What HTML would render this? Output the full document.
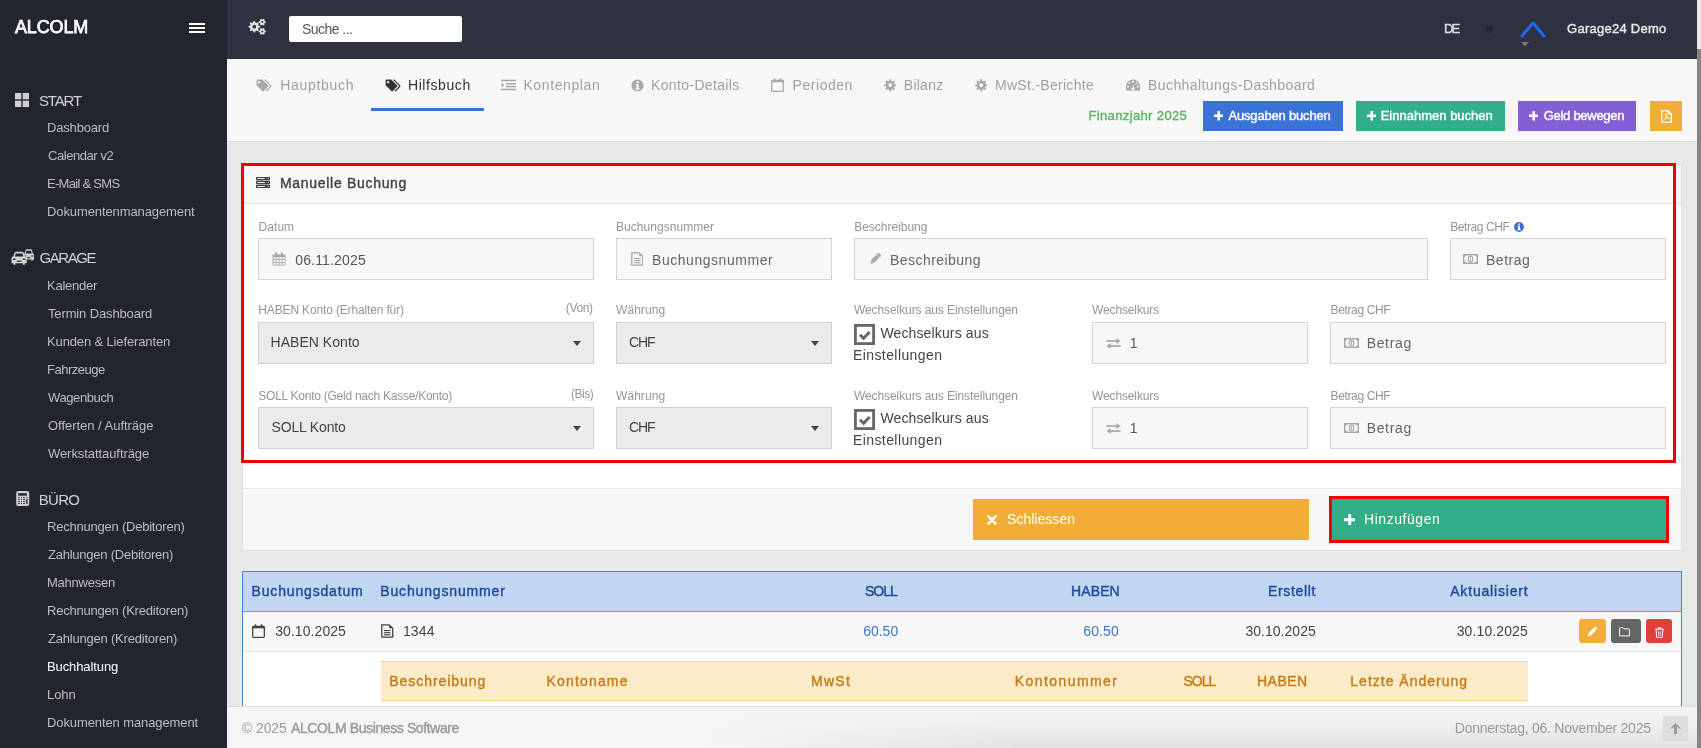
<!DOCTYPE html>
<html><head><meta charset="utf-8"><title>ALCOLM</title>
<style>
html,body{margin:0;padding:0;}
body{width:1701px;height:748px;overflow:hidden;position:relative;font-family:"Liberation Sans", sans-serif;background:#e8e8e8;}
svg{display:block}
</style></head><body>
<div style="position:absolute;left:0;top:0;width:1701px;height:748px;overflow:hidden;will-change:transform;background:#e8e8e8">
<div style="position:absolute;left:0px;top:0px;width:227px;height:748px;background:#22252e"></div>
<div style="position:absolute;left:227px;top:0px;width:1470px;height:59px;background:#2e3140"></div>
<div style="position:absolute;left:227px;top:59px;width:1470px;height:82px;background:#f7f7f7"></div>
<div style="position:absolute;left:227px;top:141px;width:1470px;height:1px;background:#dcdcdc"></div>
<div style="position:absolute;left:227px;top:142px;width:1470px;height:564px;background:#e8e8e8"></div>
<div style="position:absolute;left:1697px;top:0px;width:4px;height:748px;background:#ececec"></div>
<div style="position:absolute;left:1697px;top:49px;width:4px;height:699px;background:#858585"></div>
<span style="position:absolute;left:15.00px;top:18.26px;font-size:18px;line-height:18px;font-weight:400;color:#ffffff;white-space:nowrap;letter-spacing:-0.155px;-webkit-text-stroke:0.75px #ffffff;">ALCOLM</span>
<div style="position:absolute;left:189px;top:23px;width:16px;height:2px;background:#fff"></div>
<div style="position:absolute;left:189px;top:27px;width:16px;height:2px;background:#fff"></div>
<div style="position:absolute;left:189px;top:31px;width:16px;height:2px;background:#fff"></div>
<span style="position:absolute;left:39.00px;top:93.30px;font-size:15px;line-height:15px;font-weight:400;color:#d2d2d2;white-space:nowrap;letter-spacing:-1.155px;">START</span>
<svg style="position:absolute;left:15px;top:93px;" width="14" height="14" viewBox="0 0 14 14"><rect x="0" y="0" width="6.3" height="6.3" fill="#cfcfcf"/><rect x="7.7" y="0" width="6.3" height="6.3" fill="#cfcfcf"/><rect x="0" y="7.7" width="6.3" height="6.3" fill="#cfcfcf"/><rect x="7.7" y="7.7" width="6.3" height="6.3" fill="#cfcfcf"/></svg>
<span style="position:absolute;left:47.00px;top:121.00px;font-size:13px;line-height:13px;font-weight:400;color:#bdbdbd;white-space:nowrap;letter-spacing:-0.171px;">Dashboard</span>
<span style="position:absolute;left:48.00px;top:149.00px;font-size:13px;line-height:13px;font-weight:400;color:#bdbdbd;white-space:nowrap;letter-spacing:-0.437px;">Calendar v2</span>
<span style="position:absolute;left:47.00px;top:177.00px;font-size:13px;line-height:13px;font-weight:400;color:#bdbdbd;white-space:nowrap;letter-spacing:-0.712px;">E-Mail &amp; SMS</span>
<span style="position:absolute;left:47.00px;top:205.00px;font-size:13px;line-height:13px;font-weight:400;color:#bdbdbd;white-space:nowrap;letter-spacing:-0.104px;">Dokumentenmanagement</span>
<span style="position:absolute;left:39.50px;top:250.30px;font-size:15px;line-height:15px;font-weight:400;color:#d2d2d2;white-space:nowrap;letter-spacing:-1.435px;">GARAGE</span>
<span style="position:absolute;left:47.00px;top:279.00px;font-size:13px;line-height:13px;font-weight:400;color:#bdbdbd;white-space:nowrap;letter-spacing:-0.244px;">Kalender</span>
<span style="position:absolute;left:48.00px;top:307.00px;font-size:13px;line-height:13px;font-weight:400;color:#bdbdbd;white-space:nowrap;letter-spacing:-0.132px;">Termin Dashboard</span>
<span style="position:absolute;left:47.00px;top:335.00px;font-size:13px;line-height:13px;font-weight:400;color:#bdbdbd;white-space:nowrap;letter-spacing:-0.133px;">Kunden &amp; Lieferanten</span>
<span style="position:absolute;left:47.00px;top:363.00px;font-size:13px;line-height:13px;font-weight:400;color:#bdbdbd;white-space:nowrap;letter-spacing:-0.490px;">Fahrzeuge</span>
<span style="position:absolute;left:48.00px;top:391.00px;font-size:13px;line-height:13px;font-weight:400;color:#bdbdbd;white-space:nowrap;letter-spacing:-0.396px;">Wagenbuch</span>
<span style="position:absolute;left:48.00px;top:419.00px;font-size:13px;line-height:13px;font-weight:400;color:#bdbdbd;white-space:nowrap;letter-spacing:-0.027px;">Offerten / Aufträge</span>
<span style="position:absolute;left:48.00px;top:447.00px;font-size:13px;line-height:13px;font-weight:400;color:#bdbdbd;white-space:nowrap;letter-spacing:-0.071px;">Werkstattaufträge</span>
<span style="position:absolute;left:38.80px;top:492.30px;font-size:15px;line-height:15px;font-weight:400;color:#d2d2d2;white-space:nowrap;letter-spacing:-0.723px;">BÜRO</span>
<span style="position:absolute;left:47.00px;top:520.00px;font-size:13px;line-height:13px;font-weight:400;color:#bdbdbd;white-space:nowrap;letter-spacing:-0.221px;">Rechnungen (Debitoren)</span>
<span style="position:absolute;left:48.00px;top:548.00px;font-size:13px;line-height:13px;font-weight:400;color:#bdbdbd;white-space:nowrap;letter-spacing:-0.237px;">Zahlungen (Debitoren)</span>
<span style="position:absolute;left:47.00px;top:576.00px;font-size:13px;line-height:13px;font-weight:400;color:#bdbdbd;white-space:nowrap;letter-spacing:-0.233px;">Mahnwesen</span>
<span style="position:absolute;left:47.00px;top:604.00px;font-size:13px;line-height:13px;font-weight:400;color:#bdbdbd;white-space:nowrap;letter-spacing:-0.211px;">Rechnungen (Kreditoren)</span>
<span style="position:absolute;left:48.00px;top:632.00px;font-size:13px;line-height:13px;font-weight:400;color:#bdbdbd;white-space:nowrap;letter-spacing:-0.208px;">Zahlungen (Kreditoren)</span>
<span style="position:absolute;left:47.00px;top:660.00px;font-size:13px;line-height:13px;font-weight:400;color:#ffffff;white-space:nowrap;letter-spacing:-0.105px;">Buchhaltung</span>
<span style="position:absolute;left:47.00px;top:688.00px;font-size:13px;line-height:13px;font-weight:400;color:#bdbdbd;white-space:nowrap;letter-spacing:-0.063px;">Lohn</span>
<span style="position:absolute;left:47.00px;top:716.00px;font-size:13px;line-height:13px;font-weight:400;color:#bdbdbd;white-space:nowrap;letter-spacing:-0.104px;">Dokumenten management</span>
<div style="position:absolute;left:289px;top:16px;width:173px;height:26px;background:#fff;border-radius:2px"></div>
<span style="position:absolute;left:302.00px;top:22.15px;font-size:14px;line-height:14px;font-weight:400;color:#555;white-space:nowrap;letter-spacing:-0.546px;">Suche ...</span>
<span style="position:absolute;left:1444.00px;top:21.50px;font-size:13px;line-height:13px;font-weight:400;color:#dddddd;white-space:nowrap;letter-spacing:-1.788px;-webkit-text-stroke:0.4px #dddddd;">DE</span>
<div style="position:absolute;left:1486px;top:26px;width:7px;height:7px;border-radius:50%;background:#24262f"></div>
<svg style="position:absolute;left:1519px;top:19px;" width="28" height="20" viewBox="0 0 28 20"><polyline points="3,17 14,4 25,17" fill="none" stroke="#1a6cff" stroke-width="2.8" stroke-linecap="round" stroke-linejoin="round"/></svg>
<svg style="position:absolute;left:1521px;top:42px;" width="8" height="5" viewBox="0 0 8 5"><polygon points="0,0 8,0 4,4.5" fill="#7a7a7a"/></svg>
<span style="position:absolute;left:1567.00px;top:21.50px;font-size:13px;line-height:13px;font-weight:400;color:#e8e8e8;white-space:nowrap;letter-spacing:0.268px;-webkit-text-stroke:0.4px #e8e8e8;">Garage24 Demo</span>
<span style="position:absolute;left:280.30px;top:78.15px;font-size:14px;line-height:14px;font-weight:400;color:#a0a0a0;white-space:nowrap;letter-spacing:0.684px;">Hauptbuch</span>
<span style="position:absolute;left:408.00px;top:78.15px;font-size:14px;line-height:14px;font-weight:400;color:#333;white-space:nowrap;letter-spacing:0.576px;">Hilfsbuch</span>
<span style="position:absolute;left:523.40px;top:78.15px;font-size:14px;line-height:14px;font-weight:400;color:#a0a0a0;white-space:nowrap;letter-spacing:0.616px;">Kontenplan</span>
<span style="position:absolute;left:651.00px;top:78.15px;font-size:14px;line-height:14px;font-weight:400;color:#a0a0a0;white-space:nowrap;letter-spacing:0.355px;">Konto-Details</span>
<span style="position:absolute;left:792.60px;top:78.15px;font-size:14px;line-height:14px;font-weight:400;color:#a0a0a0;white-space:nowrap;letter-spacing:0.535px;">Perioden</span>
<span style="position:absolute;left:903.80px;top:78.15px;font-size:14px;line-height:14px;font-weight:400;color:#a0a0a0;white-space:nowrap;letter-spacing:0.254px;">Bilanz</span>
<span style="position:absolute;left:995.00px;top:78.15px;font-size:14px;line-height:14px;font-weight:400;color:#a0a0a0;white-space:nowrap;letter-spacing:0.290px;">MwSt.-Berichte</span>
<span style="position:absolute;left:1148.00px;top:78.15px;font-size:14px;line-height:14px;font-weight:400;color:#a0a0a0;white-space:nowrap;letter-spacing:0.419px;">Buchhaltungs-Dashboard</span>
<div style="position:absolute;left:371px;top:108px;width:113px;height:3px;background:#3a72d8"></div>
<span style="position:absolute;left:1088.40px;top:108.80px;font-size:13px;line-height:13px;font-weight:400;color:#5cb85c;white-space:nowrap;letter-spacing:0.372px;-webkit-text-stroke:0.4px #5cb85c;">Finanzjahr 2025</span>
<div style="position:absolute;left:1203px;top:101px;width:140px;height:30px;background:#3b72d6"></div>
<div style="position:absolute;left:1356px;top:101px;width:149px;height:30px;background:#32ae89"></div>
<div style="position:absolute;left:1518px;top:101px;width:118px;height:30px;background:#835fd4"></div>
<div style="position:absolute;left:1650px;top:101px;width:32px;height:30px;background:#f2ad36"></div>
<span style="position:absolute;left:1228.50px;top:109.00px;font-size:13px;line-height:13px;font-weight:400;color:#fff;white-space:nowrap;letter-spacing:-0.184px;-webkit-text-stroke:0.4px #fff;">Ausgaben buchen</span>
<span style="position:absolute;left:1380.70px;top:109.00px;font-size:13px;line-height:13px;font-weight:400;color:#fff;white-space:nowrap;letter-spacing:0.007px;-webkit-text-stroke:0.4px #fff;">Einnahmen buchen</span>
<span style="position:absolute;left:1543.70px;top:109.00px;font-size:13px;line-height:13px;font-weight:400;color:#fff;white-space:nowrap;letter-spacing:-0.274px;-webkit-text-stroke:0.4px #fff;">Geld bewegen</span>
<div style="position:absolute;left:242px;top:164px;width:1440px;height:387px;background:#fff;box-sizing:border-box;border:1px solid #e2e2e2"></div>
<div style="position:absolute;left:243px;top:165px;width:1438px;height:38px;background:#f8f8f8"></div>
<div style="position:absolute;left:243px;top:203px;width:1438px;height:1px;background:#e2e2e2"></div>
<span style="position:absolute;left:280.00px;top:175.65px;font-size:14px;line-height:14px;font-weight:400;color:#444;white-space:nowrap;letter-spacing:0.694px;-webkit-text-stroke:0.4px #444;">Manuelle Buchung</span>
<div style="position:absolute;left:243px;top:488px;width:1438px;height:1px;background:#e6e6e6"></div>
<div style="position:absolute;left:243px;top:489px;width:1438px;height:61px;background:#f7f7f7"></div>
<div style="position:absolute;left:242px;top:550px;width:1440px;height:1px;background:#e2e2e2"></div>
<span style="position:absolute;left:258.60px;top:220.84px;font-size:12px;line-height:12px;font-weight:400;color:#959595;white-space:nowrap;letter-spacing:0.038px;">Datum</span>
<span style="position:absolute;left:616.00px;top:220.84px;font-size:12px;line-height:12px;font-weight:400;color:#959595;white-space:nowrap;letter-spacing:0.047px;">Buchungsnummer</span>
<span style="position:absolute;left:854.20px;top:220.84px;font-size:12px;line-height:12px;font-weight:400;color:#959595;white-space:nowrap;letter-spacing:-0.019px;">Beschreibung</span>
<span style="position:absolute;left:1450.20px;top:220.84px;font-size:12px;line-height:12px;font-weight:400;color:#959595;white-space:nowrap;letter-spacing:-0.425px;">Betrag CHF</span>
<div style="position:absolute;left:258px;top:238px;width:336px;height:42px;box-sizing:border-box;border:1px solid #d4d4d4;background:#f7f7f7"></div>
<div style="position:absolute;left:616px;top:238px;width:216px;height:42px;box-sizing:border-box;border:1px solid #d4d4d4;background:#f7f7f7"></div>
<div style="position:absolute;left:854px;top:238px;width:574px;height:42px;box-sizing:border-box;border:1px solid #d4d4d4;background:#f7f7f7"></div>
<div style="position:absolute;left:1450px;top:238px;width:216px;height:42px;box-sizing:border-box;border:1px solid #d4d4d4;background:#f7f7f7"></div>
<span style="position:absolute;left:295.20px;top:253.45px;font-size:14px;line-height:14px;font-weight:400;color:#555;white-space:nowrap;letter-spacing:0.162px;">06.11.2025</span>
<span style="position:absolute;left:652.00px;top:253.45px;font-size:14px;line-height:14px;font-weight:400;color:#666;white-space:nowrap;letter-spacing:0.542px;">Buchungsnummer</span>
<span style="position:absolute;left:890.00px;top:253.45px;font-size:14px;line-height:14px;font-weight:400;color:#666;white-space:nowrap;letter-spacing:0.452px;">Beschreibung</span>
<span style="position:absolute;left:1486.00px;top:253.45px;font-size:14px;line-height:14px;font-weight:400;color:#666;white-space:nowrap;letter-spacing:0.508px;">Betrag</span>
<span style="position:absolute;left:258.30px;top:303.84px;font-size:12px;line-height:12px;font-weight:400;color:#959595;white-space:nowrap;letter-spacing:-0.148px;">HABEN Konto (Erhalten für)</span>
<span style="position:absolute;left:565.80px;top:301.84px;font-size:12px;line-height:12px;font-weight:400;color:#959595;white-space:nowrap;letter-spacing:-0.371px;">(Von)</span>
<span style="position:absolute;left:616.00px;top:303.84px;font-size:12px;line-height:12px;font-weight:400;color:#959595;white-space:nowrap;letter-spacing:0.064px;">Währung</span>
<span style="position:absolute;left:854.00px;top:303.84px;font-size:12px;line-height:12px;font-weight:400;color:#959595;white-space:nowrap;letter-spacing:-0.091px;">Wechselkurs aus Einstellungen</span>
<span style="position:absolute;left:1092.00px;top:303.84px;font-size:12px;line-height:12px;font-weight:400;color:#959595;white-space:nowrap;letter-spacing:-0.127px;">Wechselkurs</span>
<span style="position:absolute;left:1330.50px;top:303.84px;font-size:12px;line-height:12px;font-weight:400;color:#959595;white-space:nowrap;letter-spacing:-0.358px;">Betrag CHF</span>
<div style="position:absolute;left:258px;top:322px;width:336px;height:42px;box-sizing:border-box;border:1px solid #d0d0d0;background:#ebebeb"></div>
<div style="position:absolute;left:616px;top:322px;width:216px;height:42px;box-sizing:border-box;border:1px solid #d0d0d0;background:#ebebeb"></div>
<div style="position:absolute;left:1092px;top:322px;width:216px;height:42px;box-sizing:border-box;border:1px solid #d4d4d4;background:#f7f7f7"></div>
<div style="position:absolute;left:1330px;top:322px;width:336px;height:42px;box-sizing:border-box;border:1px solid #d4d4d4;background:#f7f7f7"></div>
<span style="position:absolute;left:270.50px;top:335.15px;font-size:14px;line-height:14px;font-weight:400;color:#444;white-space:nowrap;letter-spacing:0.038px;">HABEN Konto</span>
<span style="position:absolute;left:628.90px;top:335.15px;font-size:14px;line-height:14px;font-weight:400;color:#444;white-space:nowrap;letter-spacing:-1.110px;">CHF</span>
<span style="position:absolute;left:1129.80px;top:336.15px;font-size:14px;line-height:14px;font-weight:400;color:#555;white-space:nowrap;">1</span>
<span style="position:absolute;left:1366.70px;top:336.15px;font-size:14px;line-height:14px;font-weight:400;color:#666;white-space:nowrap;letter-spacing:0.648px;">Betrag</span>
<svg style="position:absolute;left:573px;top:341px;" width="8" height="5" viewBox="0 0 8 5"><polygon points="0,0 8,0 4,5" fill="#444"/></svg>
<svg style="position:absolute;left:811px;top:341px;" width="8" height="5" viewBox="0 0 8 5"><polygon points="0,0 8,0 4,5" fill="#444"/></svg>
<div style="position:absolute;left:854px;top:324.5px;width:20px;height:20px;box-sizing:border-box;border:2.5px solid #666;background:#fff"></div>
<span style="position:absolute;left:880.40px;top:326.15px;font-size:14px;line-height:14px;font-weight:400;color:#444;white-space:nowrap;letter-spacing:0.140px;">Wechselkurs aus</span>
<span style="position:absolute;left:853.00px;top:348.15px;font-size:14px;line-height:14px;font-weight:400;color:#444;white-space:nowrap;letter-spacing:0.410px;">Einstellungen</span>
<span style="position:absolute;left:258.30px;top:389.84px;font-size:12px;line-height:12px;font-weight:400;color:#959595;white-space:nowrap;letter-spacing:-0.254px;">SOLL Konto (Geld nach Kasse/Konto)</span>
<span style="position:absolute;left:570.90px;top:387.84px;font-size:12px;line-height:12px;font-weight:400;color:#959595;white-space:nowrap;letter-spacing:-0.467px;">(Bis)</span>
<span style="position:absolute;left:616.00px;top:389.84px;font-size:12px;line-height:12px;font-weight:400;color:#959595;white-space:nowrap;letter-spacing:0.064px;">Währung</span>
<span style="position:absolute;left:854.00px;top:389.84px;font-size:12px;line-height:12px;font-weight:400;color:#959595;white-space:nowrap;letter-spacing:-0.091px;">Wechselkurs aus Einstellungen</span>
<span style="position:absolute;left:1092.00px;top:389.84px;font-size:12px;line-height:12px;font-weight:400;color:#959595;white-space:nowrap;letter-spacing:-0.127px;">Wechselkurs</span>
<span style="position:absolute;left:1330.50px;top:389.84px;font-size:12px;line-height:12px;font-weight:400;color:#959595;white-space:nowrap;letter-spacing:-0.358px;">Betrag CHF</span>
<div style="position:absolute;left:258px;top:407px;width:336px;height:42px;box-sizing:border-box;border:1px solid #d0d0d0;background:#ebebeb"></div>
<div style="position:absolute;left:616px;top:407px;width:216px;height:42px;box-sizing:border-box;border:1px solid #d0d0d0;background:#ebebeb"></div>
<div style="position:absolute;left:1092px;top:407px;width:216px;height:42px;box-sizing:border-box;border:1px solid #d4d4d4;background:#f7f7f7"></div>
<div style="position:absolute;left:1330px;top:407px;width:336px;height:42px;box-sizing:border-box;border:1px solid #d4d4d4;background:#f7f7f7"></div>
<span style="position:absolute;left:271.50px;top:420.15px;font-size:14px;line-height:14px;font-weight:400;color:#444;white-space:nowrap;letter-spacing:-0.165px;">SOLL Konto</span>
<span style="position:absolute;left:628.90px;top:420.15px;font-size:14px;line-height:14px;font-weight:400;color:#444;white-space:nowrap;letter-spacing:-1.110px;">CHF</span>
<span style="position:absolute;left:1129.80px;top:421.15px;font-size:14px;line-height:14px;font-weight:400;color:#555;white-space:nowrap;">1</span>
<span style="position:absolute;left:1366.70px;top:421.15px;font-size:14px;line-height:14px;font-weight:400;color:#666;white-space:nowrap;letter-spacing:0.648px;">Betrag</span>
<svg style="position:absolute;left:573px;top:426px;" width="8" height="5" viewBox="0 0 8 5"><polygon points="0,0 8,0 4,5" fill="#444"/></svg>
<svg style="position:absolute;left:811px;top:426px;" width="8" height="5" viewBox="0 0 8 5"><polygon points="0,0 8,0 4,5" fill="#444"/></svg>
<div style="position:absolute;left:854px;top:409.5px;width:20px;height:20px;box-sizing:border-box;border:2.5px solid #666;background:#fff"></div>
<span style="position:absolute;left:880.40px;top:411.15px;font-size:14px;line-height:14px;font-weight:400;color:#444;white-space:nowrap;letter-spacing:0.140px;">Wechselkurs aus</span>
<span style="position:absolute;left:853.00px;top:433.15px;font-size:14px;line-height:14px;font-weight:400;color:#444;white-space:nowrap;letter-spacing:0.410px;">Einstellungen</span>
<div style="position:absolute;left:241px;top:163px;width:1435px;height:300px;box-sizing:border-box;border:3px solid #f20000"></div>
<div style="position:absolute;left:973px;top:499px;width:336px;height:41px;background:#f2ad36"></div>
<div style="position:absolute;left:1332px;top:499px;width:334px;height:41px;background:#32ae89"></div>
<div style="position:absolute;left:1329px;top:496px;width:340px;height:47px;box-sizing:border-box;border:3px solid #f20000"></div>
<span style="position:absolute;left:1007.00px;top:512.15px;font-size:14px;line-height:14px;font-weight:400;color:#fff;white-space:nowrap;letter-spacing:0.031px;">Schliessen</span>
<span style="position:absolute;left:1364.00px;top:512.15px;font-size:14px;line-height:14px;font-weight:400;color:#fff;white-space:nowrap;letter-spacing:0.551px;">Hinzufügen</span>
<div style="position:absolute;left:242px;top:571px;width:1440px;height:135px;box-sizing:border-box;border:1px solid #4a80d9;border-bottom:none;background:#fff"></div>
<div style="position:absolute;left:243px;top:572px;width:1438px;height:39px;background:#c2d6f2"></div>
<div style="position:absolute;left:243px;top:611px;width:1438px;height:1px;background:#6e9be0"></div>
<div style="position:absolute;left:243px;top:612px;width:1438px;height:39px;background:#f7f7f7"></div>
<div style="position:absolute;left:243px;top:651px;width:1438px;height:1px;background:#e6e6e6"></div>
<span style="position:absolute;left:251.60px;top:584.05px;font-size:14px;line-height:14px;font-weight:400;color:#1e4a9a;white-space:nowrap;letter-spacing:0.824px;-webkit-text-stroke:0.4px #1e4a9a;">Buchungsdatum</span>
<span style="position:absolute;left:380.30px;top:584.05px;font-size:14px;line-height:14px;font-weight:400;color:#1e4a9a;white-space:nowrap;letter-spacing:0.842px;-webkit-text-stroke:0.4px #1e4a9a;">Buchungsnummer</span>
<span style="position:absolute;left:864.90px;top:584.05px;font-size:14px;line-height:14px;font-weight:400;color:#1e4a9a;white-space:nowrap;letter-spacing:-0.971px;-webkit-text-stroke:0.4px #1e4a9a;">SOLL</span>
<span style="position:absolute;left:1071.00px;top:584.05px;font-size:14px;line-height:14px;font-weight:400;color:#1e4a9a;white-space:nowrap;letter-spacing:0.119px;-webkit-text-stroke:0.4px #1e4a9a;">HABEN</span>
<span style="position:absolute;left:1267.90px;top:584.05px;font-size:14px;line-height:14px;font-weight:400;color:#1e4a9a;white-space:nowrap;letter-spacing:0.686px;-webkit-text-stroke:0.4px #1e4a9a;">Erstellt</span>
<span style="position:absolute;left:1450.20px;top:584.05px;font-size:14px;line-height:14px;font-weight:400;color:#1e4a9a;white-space:nowrap;letter-spacing:0.820px;-webkit-text-stroke:0.4px #1e4a9a;">Aktualisiert</span>
<span style="position:absolute;left:275.20px;top:624.15px;font-size:14px;line-height:14px;font-weight:400;color:#444;white-space:nowrap;letter-spacing:0.069px;">30.10.2025</span>
<span style="position:absolute;left:402.90px;top:624.15px;font-size:14px;line-height:14px;font-weight:400;color:#444;white-space:nowrap;letter-spacing:0.181px;">1344</span>
<span style="position:absolute;left:863.20px;top:624.15px;font-size:14px;line-height:14px;font-weight:400;color:#3b73cc;white-space:nowrap;letter-spacing:-0.012px;">60.50</span>
<span style="position:absolute;left:1083.30px;top:624.15px;font-size:14px;line-height:14px;font-weight:400;color:#3b73cc;white-space:nowrap;letter-spacing:0.113px;">60.50</span>
<span style="position:absolute;left:1245.40px;top:624.15px;font-size:14px;line-height:14px;font-weight:400;color:#444;white-space:nowrap;letter-spacing:0.035px;">30.10.2025</span>
<span style="position:absolute;left:1456.70px;top:624.15px;font-size:14px;line-height:14px;font-weight:400;color:#444;white-space:nowrap;letter-spacing:0.113px;">30.10.2025</span>
<div style="position:absolute;left:1579px;top:619px;width:27px;height:24px;border-radius:3px;background:#f2ad36"></div>
<div style="position:absolute;left:1611px;top:619px;width:30px;height:24px;border-radius:3px;background:#646464"></div>
<div style="position:absolute;left:1646px;top:619px;width:26px;height:24px;border-radius:3px;background:#e0403a"></div>
<div style="position:absolute;left:381px;top:661px;width:1147px;height:40px;box-sizing:border-box;border-top:1px solid #f4d48e;border-bottom:1px solid #f4d48e;background:#fbebc8"></div>
<span style="position:absolute;left:389.30px;top:673.95px;font-size:14px;line-height:14px;font-weight:400;color:#c47c17;white-space:nowrap;letter-spacing:0.934px;-webkit-text-stroke:0.4px #c47c17;">Beschreibung</span>
<span style="position:absolute;left:546.50px;top:673.95px;font-size:14px;line-height:14px;font-weight:400;color:#c47c17;white-space:nowrap;letter-spacing:1.172px;-webkit-text-stroke:0.4px #c47c17;">Kontoname</span>
<span style="position:absolute;left:811.00px;top:673.95px;font-size:14px;line-height:14px;font-weight:400;color:#c47c17;white-space:nowrap;letter-spacing:1.297px;-webkit-text-stroke:0.4px #c47c17;">MwSt</span>
<span style="position:absolute;left:1014.80px;top:673.95px;font-size:14px;line-height:14px;font-weight:400;color:#c47c17;white-space:nowrap;letter-spacing:1.423px;-webkit-text-stroke:0.4px #c47c17;">Kontonummer</span>
<span style="position:absolute;left:1183.50px;top:673.95px;font-size:14px;line-height:14px;font-weight:400;color:#c47c17;white-space:nowrap;letter-spacing:-0.971px;-webkit-text-stroke:0.4px #c47c17;">SOLL</span>
<span style="position:absolute;left:1257.00px;top:673.95px;font-size:14px;line-height:14px;font-weight:400;color:#c47c17;white-space:nowrap;letter-spacing:0.469px;-webkit-text-stroke:0.4px #c47c17;">HABEN</span>
<span style="position:absolute;left:1350.30px;top:673.95px;font-size:14px;line-height:14px;font-weight:400;color:#c47c17;white-space:nowrap;letter-spacing:1.003px;-webkit-text-stroke:0.4px #c47c17;">Letzte Änderung</span>
<div style="position:absolute;left:227px;top:706px;width:1470px;height:42px;background:#f5f5f5"></div>
<div style="position:absolute;left:227px;top:706px;width:1470px;height:1px;background:#dddddd"></div>
<div style="position:absolute;left:700px;top:707px;width:997px;height:41px;background:linear-gradient(to bottom,rgba(0,0,0,0) 0%,rgba(0,0,0,0.02) 40%,rgba(0,0,0,0.08) 100%);-webkit-mask-image:linear-gradient(to right,transparent 0,#000 320px,#000 997px)"></div>
<span style="position:absolute;left:242.00px;top:721.45px;font-size:14px;line-height:14px;font-weight:400;color:#9a9a9a;white-space:nowrap;letter-spacing:-0.113px;">© 2025</span>
<span style="position:absolute;left:291.00px;top:720.95px;font-size:14px;line-height:14px;font-weight:400;color:#9a9a9a;white-space:nowrap;letter-spacing:-0.392px;-webkit-text-stroke:0.4px #9a9a9a;">ALCOLM Business Software</span>
<span style="position:absolute;left:1454.80px;top:721.25px;font-size:14px;line-height:14px;font-weight:400;color:#9a9a9a;white-space:nowrap;letter-spacing:-0.248px;">Donnerstag, 06. November 2025</span>
<div style="position:absolute;left:1663px;top:716px;width:25px;height:25px;background:#dedede;border-radius:2px"></div>
<svg style="position:absolute;left:248px;top:18px;" width="19" height="18" viewBox="0 0 19 18"><path d="M12.07,8.13 L12.07,9.27 L10.41,9.95 L10.09,10.73 L10.78,12.38 L9.98,13.18 L8.33,12.49 L7.55,12.81 L6.87,14.47 L5.73,14.47 L5.05,12.81 L4.27,12.49 L2.62,13.18 L1.82,12.38 L2.51,10.73 L2.19,9.95 L0.53,9.27 L0.53,8.13 L2.19,7.45 L2.51,6.67 L1.82,5.02 L2.62,4.22 L4.27,4.91 L5.05,4.59 L5.73,2.93 L6.87,2.93 L7.55,4.59 L8.33,4.91 L9.98,4.22 L10.78,5.02 L10.09,6.67 L10.41,7.45Z M8.20,8.70 A1.9,1.9 0 1,0 4.40,8.70 A1.9,1.9 0 1,0 8.20,8.70Z M17.87,3.63 L17.87,4.57 L16.70,5.09 L16.36,5.68 L16.49,6.96 L15.68,7.43 L14.64,6.68 L13.96,6.68 L12.92,7.43 L12.11,6.96 L12.24,5.68 L11.90,5.09 L10.73,4.57 L10.73,3.63 L11.90,3.11 L12.24,2.52 L12.11,1.24 L12.92,0.77 L13.96,1.52 L14.64,1.52 L15.68,0.77 L16.49,1.24 L16.36,2.52 L16.70,3.11Z M15.30,4.10 A1.0,1.0 0 1,0 13.30,4.10 A1.0,1.0 0 1,0 15.30,4.10Z M17.87,12.93 L17.87,13.87 L16.70,14.39 L16.36,14.98 L16.49,16.26 L15.68,16.73 L14.64,15.98 L13.96,15.98 L12.92,16.73 L12.11,16.26 L12.24,14.98 L11.90,14.39 L10.73,13.87 L10.73,12.93 L11.90,12.41 L12.24,11.82 L12.11,10.54 L12.92,10.07 L13.96,10.82 L14.64,10.82 L15.68,10.07 L16.49,10.54 L16.36,11.82 L16.70,12.41Z M15.30,13.40 A1.0,1.0 0 1,0 13.30,13.40 A1.0,1.0 0 1,0 15.30,13.40Z" fill="#e6e6e6" fill-rule="evenodd"/></svg>
<svg style="position:absolute;left:11px;top:248px;" width="25" height="19" viewBox="0 0 25 19"><g transform="translate(0,0)"><g transform="translate(12.5,1.2) scale(0.66,0.86)"><path d="M3,1.5 Q3.6,0 5,0 L11,0 Q12.4,0 13,1.5 L14.2,5 L15.5,5.6 L16,7 L16,12 L14,12 L14,13.5 L12,13.5 L12,12 L4,12 L4,13.5 L2,13.5 L2,12 L0,12 L0,7 L0.5,5.6 L1.8,5 Z" fill="#cfcfcf"/><path d="M3.6,5 L4.4,1.8 L11.6,1.8 L12.4,5 Z" fill="#22252e"/><rect x="1.5" y="7.2" width="2.6" height="1.4" fill="#22252e"/><rect x="11.9" y="7.2" width="2.6" height="1.4" fill="#22252e"/><rect x="5.5" y="9.3" width="5" height="1.2" fill="#22252e"/></g></g><path d="M11,5.5 L13,4 L13,14 L11,14Z" fill="#22252e"/><g transform="translate(0.5,3.8) scale(0.95)"><path d="M3,1.5 Q3.6,0 5,0 L11,0 Q12.4,0 13,1.5 L14.2,5 L15.5,5.6 L16,7 L16,12 L14,12 L14,13.5 L12,13.5 L12,12 L4,12 L4,13.5 L2,13.5 L2,12 L0,12 L0,7 L0.5,5.6 L1.8,5 Z" fill="#d6d6d6"/><path d="M3.6,5 L4.4,1.8 L11.6,1.8 L12.4,5 Z" fill="#22252e"/><rect x="1.5" y="7.2" width="2.6" height="1.4" fill="#22252e"/><rect x="11.9" y="7.2" width="2.6" height="1.4" fill="#22252e"/><rect x="5.5" y="9.3" width="5" height="1.2" fill="#22252e"/></g></svg>
<svg style="position:absolute;left:16px;top:491px;" width="14" height="15" viewBox="0 0 14 15"><rect x="0.2" y="0" width="13" height="15" rx="2" fill="#cfcfcf"/><rect x="2.2" y="2.2" width="8.7" height="2.5" fill="#22252e"/><rect x="2.2" y="6.2" width="1.6" height="0.95" fill="#22252e"/><rect x="5.1" y="6.2" width="0.9" height="0.95" fill="#22252e"/><rect x="7.1" y="6.2" width="1.8" height="0.95" fill="#22252e"/><rect x="2.2" y="8.0" width="1.6" height="0.95" fill="#22252e"/><rect x="5.1" y="8.0" width="0.9" height="0.95" fill="#22252e"/><rect x="7.1" y="8.0" width="1.8" height="0.95" fill="#22252e"/><rect x="2.2" y="10.0" width="1.6" height="0.95" fill="#22252e"/><rect x="5.1" y="10.0" width="0.9" height="0.95" fill="#22252e"/><rect x="7.1" y="10.0" width="1.8" height="0.95" fill="#22252e"/><rect x="2.2" y="12.0" width="1.6" height="0.95" fill="#22252e"/><rect x="5.1" y="12.0" width="0.9" height="0.95" fill="#22252e"/><rect x="7.1" y="12.0" width="1.8" height="0.95" fill="#22252e"/><rect x="10.2" y="6.2" width="1.3" height="0.95" fill="#22252e"/><rect x="10.2" y="8.0" width="1.3" height="4.9" fill="#22252e"/></svg>
<svg style="position:absolute;left:256px;top:78.5px;" width="16" height="13" viewBox="0 0 16 13"><path d="M0.6,1.6 Q0.6,0.6 1.6,0.6 L6.2,0.6 L12.2,6.6 Q12.7,7.1 12.2,7.6 L7.6,12.2 Q7.1,12.7 6.6,12.2 L0.6,6.2 Z" fill="#a8a8a8"/><circle cx="3.1" cy="3.1" r="1.2" fill="#f7f7f7"/><path d="M8.6,0.6 L14.6,6.6 Q15.1,7.1 14.6,7.6 L10,12.2" fill="none" stroke="#a8a8a8" stroke-width="1.3"/></svg>
<svg style="position:absolute;left:384.5px;top:78.5px;" width="16" height="13" viewBox="0 0 16 13"><path d="M0.6,1.6 Q0.6,0.6 1.6,0.6 L6.2,0.6 L12.2,6.6 Q12.7,7.1 12.2,7.6 L7.6,12.2 Q7.1,12.7 6.6,12.2 L0.6,6.2 Z" fill="#333333"/><circle cx="3.1" cy="3.1" r="1.2" fill="#f7f7f7"/><path d="M8.6,0.6 L14.6,6.6 Q15.1,7.1 14.6,7.6 L10,12.2" fill="none" stroke="#333333" stroke-width="1.3"/></svg>
<svg style="position:absolute;left:501px;top:78.5px;" width="15" height="12" viewBox="0 0 15 12"><rect x="0" y="0.7" width="15" height="1.5" fill="#a8a8a8"/><rect x="5" y="4" width="10" height="1.5" fill="#a8a8a8"/><rect x="5" y="6.8" width="10" height="1.5" fill="#a8a8a8"/><rect x="0" y="9.7" width="15" height="1.6" fill="#a8a8a8"/><path d="M0.6,3.3 L3.2,6 L0.6,8.7Z" fill="#a8a8a8"/></svg>
<svg style="position:absolute;left:630.5px;top:78.5px;" width="13" height="13" viewBox="0 0 13 13"><circle cx="6.5" cy="6.5" r="6" fill="#a8a8a8"/><rect x="5.6" y="2.3" width="2.2" height="1.9" fill="#f7f7f7"/><path d="M4.6,5.3 L7.8,5.3 L7.8,9.3 L8.6,9.3 L8.6,10.7 L4.6,10.7 L4.6,9.3 L5.5,9.3 L5.5,6.6 L4.6,6.6Z" fill="#f7f7f7"/></svg>
<svg style="position:absolute;left:771px;top:78px;" width="13" height="14" viewBox="0 0 13 14"><rect x="0.65" y="2.4" width="11.7" height="10.95" rx="0.8" fill="none" stroke="#a8a8a8" stroke-width="1.3"/><rect x="0.65" y="2.4" width="11.7" height="1.9" fill="#a8a8a8"/><rect x="2.6" y="0.3" width="1.8" height="3.0" rx="0.8" fill="#a8a8a8"/><rect x="8.6" y="0.3" width="1.8" height="3.0" rx="0.8" fill="#a8a8a8"/></svg>
<svg style="position:absolute;left:883.5px;top:79px;" width="12.5" height="12.5" viewBox="0 0 12.5 12.5"><path d="M12.47,5.64 L12.47,6.86 L10.41,7.51 L10.09,8.30 L11.08,10.21 L10.21,11.08 L8.30,10.09 L7.51,10.41 L6.86,12.47 L5.64,12.47 L4.99,10.41 L4.20,10.09 L2.29,11.08 L1.42,10.21 L2.41,8.30 L2.09,7.51 L0.03,6.86 L0.03,5.64 L2.09,4.99 L2.41,4.20 L1.42,2.29 L2.29,1.42 L4.20,2.41 L4.99,2.09 L5.64,0.03 L6.86,0.03 L7.51,2.09 L8.30,2.41 L10.21,1.42 L11.08,2.29 L10.09,4.20 L10.41,4.99Z M8.15,6.25 A1.9,1.9 0 1,0 4.35,6.25 A1.9,1.9 0 1,0 8.15,6.25Z" fill="#a8a8a8" fill-rule="evenodd"/></svg>
<svg style="position:absolute;left:974.5px;top:79px;" width="12.5" height="12.5" viewBox="0 0 12.5 12.5"><path d="M12.47,5.64 L12.47,6.86 L10.41,7.51 L10.09,8.30 L11.08,10.21 L10.21,11.08 L8.30,10.09 L7.51,10.41 L6.86,12.47 L5.64,12.47 L4.99,10.41 L4.20,10.09 L2.29,11.08 L1.42,10.21 L2.41,8.30 L2.09,7.51 L0.03,6.86 L0.03,5.64 L2.09,4.99 L2.41,4.20 L1.42,2.29 L2.29,1.42 L4.20,2.41 L4.99,2.09 L5.64,0.03 L6.86,0.03 L7.51,2.09 L8.30,2.41 L10.21,1.42 L11.08,2.29 L10.09,4.20 L10.41,4.99Z M8.15,6.25 A1.9,1.9 0 1,0 4.35,6.25 A1.9,1.9 0 1,0 8.15,6.25Z" fill="#a8a8a8" fill-rule="evenodd"/></svg>
<svg style="position:absolute;left:1126px;top:79px;" width="14" height="12" viewBox="0 0 14 12"><path d="M0.3,11.5 Q0,9.5 0,7.5 A7,7 0 0,1 14,7.5 Q14,9.5 13.7,11.5 Z" fill="#a8a8a8"/><rect x="6.1" y="1.8" width="1.8" height="1.8" fill="#f7f7f7"/><rect x="2.6" y="3.3" width="1.6" height="1.6" fill="#f7f7f7"/><rect x="9.8" y="3.3" width="1.6" height="1.6" fill="#f7f7f7"/><rect x="1.2" y="6.6" width="1.8" height="1.8" fill="#f7f7f7"/><rect x="11" y="6.6" width="1.8" height="1.8" fill="#f7f7f7"/><path d="M8.6,3.6 L7.6,8.5 L6.6,8.5Z" fill="#f7f7f7"/><circle cx="7" cy="9.6" r="1.6" fill="#f7f7f7"/></svg>
<svg style="position:absolute;left:1213.5px;top:111px;" width="9.5" height="9.5" viewBox="0 0 9.5 9.5"><rect x="0" y="3.45" width="9.5" height="2.6" fill="#fff"/><rect x="3.45" y="0" width="2.6" height="9.5" fill="#fff"/></svg>
<svg style="position:absolute;left:1366.8px;top:111px;" width="9.5" height="9.5" viewBox="0 0 9.5 9.5"><rect x="0" y="3.45" width="9.5" height="2.6" fill="#fff"/><rect x="3.45" y="0" width="2.6" height="9.5" fill="#fff"/></svg>
<svg style="position:absolute;left:1528.8px;top:111px;" width="9.5" height="9.5" viewBox="0 0 9.5 9.5"><rect x="0" y="3.45" width="9.5" height="2.6" fill="#fff"/><rect x="3.45" y="0" width="2.6" height="9.5" fill="#fff"/></svg>
<svg style="position:absolute;left:1343.5px;top:513.5px;" width="11.5" height="11.5" viewBox="0 0 11.5 11.5"><rect x="0" y="4.25" width="11.5" height="3" fill="#fff"/><rect x="4.25" y="0" width="3" height="11.5" fill="#fff"/></svg>
<svg style="position:absolute;left:1660.5px;top:109.5px;" width="11" height="13" viewBox="0 0 11 13"><path d="M0.7,0.7 L7,0.7 L10.3,4 L10.3,12.3 L0.7,12.3Z" fill="none" stroke="#fff" stroke-width="1.3"/><path d="M7,0.7 L7,4 L10.3,4" fill="none" stroke="#fff" stroke-width="1.2"/><path d="M2.2,10.8 L5,7.2 L4.6,3.6 L5.4,7.4 L8.6,8.6 L5,7.6" fill="none" stroke="#fff" stroke-width="0.8"/></svg>
<svg style="position:absolute;left:256px;top:177px;" width="14" height="11" viewBox="0 0 14 11"><rect x="0.6" y="0.6" width="12.8" height="2.4" rx="0.5" fill="none" stroke="#444" stroke-width="1.2"/><rect x="0" y="0" width="14" height="3" rx="0.6" fill="#444"/><rect x="1.3" y="1.1" width="7.5" height="0.9" fill="#f8f8f8"/><circle cx="12.2" cy="1.5" r="0.5" fill="#f8f8f8"/><rect x="0.6" y="4.6" width="12.8" height="2.4" rx="0.5" fill="none" stroke="#444" stroke-width="1.2"/><rect x="0" y="4" width="14" height="3" rx="0.6" fill="#444"/><rect x="1.3" y="5.1" width="7.5" height="0.9" fill="#f8f8f8"/><circle cx="12.2" cy="5.5" r="0.5" fill="#f8f8f8"/><rect x="0.6" y="8.6" width="12.8" height="2.4" rx="0.5" fill="none" stroke="#444" stroke-width="1.2"/><rect x="0" y="8" width="14" height="3" rx="0.6" fill="#444"/><rect x="1.3" y="9.1" width="7.5" height="0.9" fill="#f8f8f8"/><circle cx="12.2" cy="9.5" r="0.5" fill="#f8f8f8"/></svg>
<svg style="position:absolute;left:272px;top:252px;" width="14" height="14" viewBox="0 0 14 14"><rect x="0.5" y="2.5" width="13" height="11" rx="1" fill="#a8a8a8"/><rect x="3" y="0.5" width="2.2" height="3.5" rx="0.8" fill="#a8a8a8"/><rect x="8.8" y="0.5" width="2.2" height="3.5" rx="0.8" fill="#a8a8a8"/><rect x="1.5" y="5.2" width="2.2" height="2.0" fill="#f7f7f7"/><rect x="1.5" y="8.0" width="2.2" height="2.0" fill="#f7f7f7"/><rect x="1.5" y="10.8" width="2.2" height="2.0" fill="#f7f7f7"/><rect x="4.5" y="5.2" width="2.2" height="2.0" fill="#f7f7f7"/><rect x="4.5" y="8.0" width="2.2" height="2.0" fill="#f7f7f7"/><rect x="4.5" y="10.8" width="2.2" height="2.0" fill="#f7f7f7"/><rect x="7.5" y="5.2" width="2.2" height="2.0" fill="#f7f7f7"/><rect x="7.5" y="8.0" width="2.2" height="2.0" fill="#f7f7f7"/><rect x="7.5" y="10.8" width="2.2" height="2.0" fill="#f7f7f7"/><rect x="10.5" y="5.2" width="2.2" height="2.0" fill="#f7f7f7"/><rect x="10.5" y="8.0" width="2.2" height="2.0" fill="#f7f7f7"/><rect x="10.5" y="10.8" width="2.2" height="2.0" fill="#f7f7f7"/></svg>
<svg style="position:absolute;left:630.5px;top:252px;" width="12.5" height="14" viewBox="0 0 12.5 14"><path d="M0.8,0.8 L8.2,0.8 L11.7,4.3 L11.7,13.2 L0.8,13.2Z" fill="none" stroke="#a8a8a8" stroke-width="1.3"/><path d="M8.2,0.8 L8.2,4.3 L11.7,4.3Z" fill="#a8a8a8"/><rect x="3" y="6" width="6.5" height="1.1" fill="#a8a8a8"/><rect x="3" y="8.1" width="6.5" height="1.1" fill="#a8a8a8"/><rect x="3" y="10.2" width="6.5" height="1.1" fill="#a8a8a8"/></svg>
<svg style="position:absolute;left:868.5px;top:252.8px;" width="12" height="12" viewBox="0 0 12 12"><g transform="rotate(45 6.0 6.0)"><rect x="4.0" y="-1" width="4" height="2.6" rx="0.6" fill="#a8a8a8"/><rect x="4.0" y="2.1" width="4" height="7.2" fill="#a8a8a8"/><path d="M4.0,9.3 L8.0,9.3 L6.0,12.6Z" fill="#a8a8a8"/></g></svg>
<svg style="position:absolute;left:1463px;top:254px;" width="15" height="10" viewBox="0 0 15 10"><rect x="0.7" y="0.7" width="13.6" height="8.6" fill="none" stroke="#a8a8a8" stroke-width="1.4"/><path d="M0.7,0.7 L3.5,0.7 L0.7,3.5Z M14.3,0.7 L11.5,0.7 L14.3,3.5Z M0.7,9.3 L3.5,9.3 L0.7,6.5Z M14.3,9.3 L11.5,9.3 L14.3,6.5Z" fill="#a8a8a8"/><ellipse cx="7.5" cy="5" rx="2.3" ry="2.9" fill="none" stroke="#a8a8a8" stroke-width="1.1"/><rect x="7" y="3.3" width="1" height="3.4" fill="#a8a8a8"/></svg>
<svg style="position:absolute;left:1343.8px;top:338px;" width="15" height="10" viewBox="0 0 15 10"><rect x="0.7" y="0.7" width="13.6" height="8.6" fill="none" stroke="#a8a8a8" stroke-width="1.4"/><path d="M0.7,0.7 L3.5,0.7 L0.7,3.5Z M14.3,0.7 L11.5,0.7 L14.3,3.5Z M0.7,9.3 L3.5,9.3 L0.7,6.5Z M14.3,9.3 L11.5,9.3 L14.3,6.5Z" fill="#a8a8a8"/><ellipse cx="7.5" cy="5" rx="2.3" ry="2.9" fill="none" stroke="#a8a8a8" stroke-width="1.1"/><rect x="7" y="3.3" width="1" height="3.4" fill="#a8a8a8"/></svg>
<svg style="position:absolute;left:1105.5px;top:338px;" width="15" height="11" viewBox="0 0 15 11"><rect x="0.3" y="2.1" width="11" height="1.7" fill="#a8a8a8"/><path d="M10.5,0 L14.5,2.95 L10.5,5.9Z" fill="#a8a8a8"/><rect x="3.7" y="7.2" width="11" height="1.7" fill="#a8a8a8"/><path d="M4.5,5.1 L0.5,8.05 L4.5,11Z" fill="#a8a8a8"/></svg>
<svg style="position:absolute;left:854px;top:324px;" width="21" height="21" viewBox="0 0 21 21"><rect x="1.4" y="1.4" width="18.2" height="18.2" fill="#fff" stroke="#666" stroke-width="2.8"/><polyline points="6,10.8 9.6,14.4 15.6,8" fill="none" stroke="#666" stroke-width="3"/></svg>
<svg style="position:absolute;left:1343.8px;top:423px;" width="15" height="10" viewBox="0 0 15 10"><rect x="0.7" y="0.7" width="13.6" height="8.6" fill="none" stroke="#a8a8a8" stroke-width="1.4"/><path d="M0.7,0.7 L3.5,0.7 L0.7,3.5Z M14.3,0.7 L11.5,0.7 L14.3,3.5Z M0.7,9.3 L3.5,9.3 L0.7,6.5Z M14.3,9.3 L11.5,9.3 L14.3,6.5Z" fill="#a8a8a8"/><ellipse cx="7.5" cy="5" rx="2.3" ry="2.9" fill="none" stroke="#a8a8a8" stroke-width="1.1"/><rect x="7" y="3.3" width="1" height="3.4" fill="#a8a8a8"/></svg>
<svg style="position:absolute;left:1105.5px;top:423px;" width="15" height="11" viewBox="0 0 15 11"><rect x="0.3" y="2.1" width="11" height="1.7" fill="#a8a8a8"/><path d="M10.5,0 L14.5,2.95 L10.5,5.9Z" fill="#a8a8a8"/><rect x="3.7" y="7.2" width="11" height="1.7" fill="#a8a8a8"/><path d="M4.5,5.1 L0.5,8.05 L4.5,11Z" fill="#a8a8a8"/></svg>
<svg style="position:absolute;left:854px;top:409px;" width="21" height="21" viewBox="0 0 21 21"><rect x="1.4" y="1.4" width="18.2" height="18.2" fill="#fff" stroke="#666" stroke-width="2.8"/><polyline points="6,10.8 9.6,14.4 15.6,8" fill="none" stroke="#666" stroke-width="3"/></svg>
<svg style="position:absolute;left:1514px;top:222px;" width="10" height="10" viewBox="0 0 10 10"><circle cx="5" cy="5" r="4.9" fill="#3a70d6"/><rect x="4.3" y="1.5" width="1.7" height="1.5" fill="#fff"/><path d="M3.5,3.7 L6,3.7 L6,7 L6.7,7 L6.7,8.2 L3.5,8.2 L3.5,7 L4.2,7 L4.2,4.8 L3.5,4.8Z" fill="#fff"/></svg>
<svg style="position:absolute;left:986.5px;top:514.5px;" width="10" height="10" viewBox="0 0 10 10"><path d="M1.5,1.5 L8.5,8.5 M8.5,1.5 L1.5,8.5" stroke="#fff" stroke-width="2.6" stroke-linecap="round"/></svg>
<svg style="position:absolute;left:252px;top:624px;" width="13" height="14" viewBox="0 0 13 14"><rect x="0.65" y="2.4" width="11.7" height="10.95" rx="0.8" fill="none" stroke="#444" stroke-width="1.3"/><rect x="0.65" y="2.4" width="11.7" height="1.9" fill="#444"/><rect x="2.6" y="0.3" width="1.8" height="3.0" rx="0.8" fill="#444"/><rect x="8.6" y="0.3" width="1.8" height="3.0" rx="0.8" fill="#444"/></svg>
<svg style="position:absolute;left:381px;top:624px;" width="12.5" height="14" viewBox="0 0 12.5 14"><path d="M0.8,0.8 L8.2,0.8 L11.7,4.3 L11.7,13.2 L0.8,13.2Z" fill="none" stroke="#444" stroke-width="1.3"/><path d="M8.2,0.8 L8.2,4.3 L11.7,4.3Z" fill="#444"/><rect x="3" y="6" width="6.5" height="1.1" fill="#444"/><rect x="3" y="8.1" width="6.5" height="1.1" fill="#444"/><rect x="3" y="10.2" width="6.5" height="1.1" fill="#444"/></svg>
<svg style="position:absolute;left:1587px;top:627px;" width="10" height="10" viewBox="0 0 10 10"><g transform="rotate(45 5 5)"><rect x="3.3" y="-1.5" width="3.4" height="2.2" rx="0.5" fill="#fff"/><rect x="3.3" y="1.2" width="3.4" height="7" fill="#fff"/><path d="M3.3,8.2 L6.7,8.2 L5,11.2Z" fill="#fff"/></g></svg>
<svg style="position:absolute;left:1619px;top:626.5px;" width="11.5" height="10" viewBox="0 0 11.5 10"><path d="M0.6,8.9 L0.6,1.4 Q0.6,0.6 1.4,0.6 L3.8,0.6 L4.8,1.8 L9.6,1.8 Q10.4,1.8 10.4,2.6 L10.4,8.9Z" fill="none" stroke="#fff" stroke-width="1.0"/></svg>
<svg style="position:absolute;left:1654.5px;top:626.5px;" width="9" height="11" viewBox="0 0 9 11"><rect x="0" y="1.7" width="9" height="1" fill="#fff"/><rect x="3" y="0.4" width="3" height="1.6" rx="0.5" fill="none" stroke="#fff" stroke-width="0.8"/><path d="M1.2,2.7 L1.6,10.3 L7.4,10.3 L7.8,2.7" fill="none" stroke="#fff" stroke-width="1.0"/><rect x="3.3" y="4.3" width="0.8" height="4.4" fill="#fff"/><rect x="4.9" y="4.3" width="0.8" height="4.4" fill="#fff"/></svg>
<svg style="position:absolute;left:1669px;top:722px;" width="13" height="13" viewBox="0 0 13 13"><path d="M6.5,1 L12,6.5 L9.8,6.5 L8,4.8 L8,12 L5,12 L5,4.8 L3.2,6.5 L1,6.5Z" fill="#9a9a9a"/></svg>
</div>
</body></html>
